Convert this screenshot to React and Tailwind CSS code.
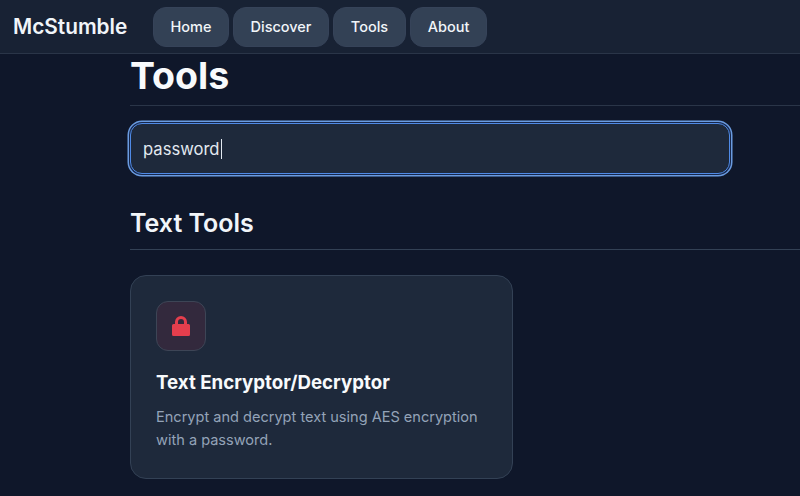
const navItems = [
  { name: "Home", width: "w-[76px]" },
  { name: "Discover", width: "w-[96px]" },
  { name: "Tools", width: "w-[73px]" },
  { name: "About", width: "w-[77px]" },
];

const App = () => {
  return (
    <div className="h-[496px] w-[800px] overflow-hidden bg-[#0f172a] font-['Inter',sans-serif] text-white">
      {/* Top Bar */}
      <header className="flex h-[54px] items-center border-b border-[#2a3548] bg-[#182234] pl-[13px]">
        <span className="w-[140px] text-[20.8px] leading-7 font-semibold text-[#f1f5f9]">McStumble</span>
        <nav className="flex gap-[4px]">
          {navItems.map((item) => (
            <button
              key={item.name}
              className={`h-[40px] ${item.width} rounded-[13px] border border-[#364359] bg-[#334155] text-[14.5px] font-medium text-[#f1f5f9]`}
            >
              {item.name}
            </button>
          ))}
        </nav>
      </header>

      {/* Main Content */}
      <main className="pl-[130px]">
        <h1 className="h-[52px] border-b border-[#2a3548] pt-[2px] text-[37.5px] leading-10 font-bold text-[#f8fafc]">
          Tools
        </h1>

        <div className="mt-[17px] flex h-[51px] w-[600px] items-center rounded-xl border border-[#4f8ae6] bg-[#1e293b] pt-[1px] pl-[12px] text-[16.6px] text-[#e2e8f0] shadow-[0_0_0_1px_#16264a,0_0_0_2.5px_#6a9be0]">
          password
          <span className="ml-[1px] h-[20px] w-px bg-[#e2e8f0]" />
        </div>

        <h2 className="mt-[33px] h-[43px] border-b border-[#334155] text-[25px] leading-8 font-semibold text-[#f1f5f9]">
          Text Tools
        </h2>

        {/* Tool Card */}
        <div className="mt-[25px] h-[204px] w-[383px] rounded-2xl border border-[#334155] bg-[#1e293b] p-[25px]">
          <div className="flex h-[50px] w-[50px] items-center justify-center rounded-xl border border-[#3d4556] bg-[#33293d]">
            <svg viewBox="0 0 18 20" className="h-[20px] w-[18px]" fill="#e53e4d">
              <path d="M3 8V6a6 6 0 0 1 12 0v2h1.5A1.5 1.5 0 0 1 18 9.5v9a1.5 1.5 0 0 1-1.5 1.5h-15A1.5 1.5 0 0 1 0 18.5v-9A1.5 1.5 0 0 1 1.5 8Zm3 0h6V6a3 3 0 0 0-6 0Z" />
            </svg>
          </div>
          <h3 className="mt-[18px] text-[18.7px] leading-7 font-bold text-[#f8fafc]">Text Encryptor/Decryptor</h3>
          <p className="mt-[9px] text-[14.55px] leading-[23px] text-[#94a3b8]">
            Encrypt and decrypt text using AES encryption with a password.
          </p>
        </div>
      </main>
    </div>
  );
};

export default App;
